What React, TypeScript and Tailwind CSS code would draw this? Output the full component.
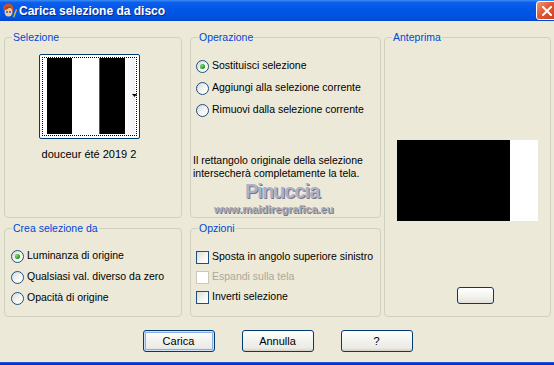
import React from "react";

function Radio({ checked }: { checked?: boolean }) {
  return (
    <span className="flex items-center justify-center w-[13px] h-[13px] shrink-0 rounded-full border border-[#1C5180] bg-[linear-gradient(135deg,#D8D8D2,#F8F8F6_60%,#FFFFFF)]">
      {checked && <span className="w-[5px] h-[5px] rounded-full bg-[radial-gradient(circle_at_35%_35%,#7BE07B,#21A121_60%,#1A8A1A)]" />}
    </span>
  );
}

function Check({ disabled }: { disabled?: boolean }) {
  return (
    <span
      className={
        disabled
          ? "block w-[13px] h-[13px] shrink-0 border border-[#CAC8BB] bg-white"
          : "block w-[13px] h-[13px] shrink-0 border border-[#1C5180] bg-[linear-gradient(135deg,#DCDCD7,#F6F6F4_60%,#FFFFFF)]"
      }
    />
  );
}

function Group({ label, className, children }: { label: string; className: string; children?: React.ReactNode }) {
  return (
    <div className={"relative border border-[#D0D0BF] rounded-[4px] " + className}>
      <span className="absolute left-[7px] top-[-8px] px-[1px] bg-[#ECE9D8] text-[#0046D5] leading-[14px] whitespace-nowrap">
        {label}
      </span>
      {children}
    </div>
  );
}

function Btn({ children, def }: { children: React.ReactNode; def?: boolean }) {
  return (
    <div
      className={
        "flex items-center justify-center w-[72px] h-[22px] rounded-[3px] border border-[#003C74] bg-[linear-gradient(180deg,#FFFFFF_0%,#F4F4F0_40%,#ECEBE6_85%,#D6D0C5_100%)] text-black " +
        (def ? "shadow-[inset_0_0_0_1px_#CEE0F8,inset_0_0_0_2px_#8AAEE6]" : "")
      }
    >
      {children}
    </div>
  );
}

export default function App() {
  return (
    <div className="w-[554px] h-[365px] overflow-hidden flex flex-col bg-[#ECE9D8] font-['Liberation_Sans',Arial,sans-serif] text-[10.5px] text-black">
      {/* Title bar */}
      <div className="h-[21px] shrink-0 flex items-center bg-[linear-gradient(180deg,#3B8CF5_0%,#0C5FEA_12%,#0056E6_45%,#0053E1_80%,#0046CE_100%)]">
        <svg width="16" height="16" viewBox="0 0 16 16" className="ml-[1px] shrink-0">
          <path d="M2 6 C2 2 6 0 9 1 C12 2 13 5 12 8 L10 7 L6 9 Z" fill="#C8552A" />
          <ellipse cx="7.5" cy="9" rx="4" ry="4.5" fill="#F5C89A" />
          <path d="M3 6 C4 3 8 2 11 5 L8 5 L5 7 Z" fill="#B8431E" />
          <circle cx="6" cy="9" r="0.9" fill="#2050A0" />
          <circle cx="9" cy="9" r="0.9" fill="#2050A0" />
          <path d="M12 14 L15 6 L16 7 L13 15 Z" fill="#E8C030" />
          <path d="M11 15 L12 13 L13 15 Z" fill="#2060C0" />
        </svg>
        <span className="ml-[2px] text-white font-bold text-[12px] leading-[16px] font-['Liberation_Sans',Arial,sans-serif] [text-shadow:1px_1px_0_#0A2A8A]">
          Carica selezione da disco
        </span>
        <div className="ml-auto mr-[-4px] w-[22px] h-[19px] rounded-[3px] border border-white bg-[linear-gradient(135deg,#F0977A_0%,#E0562F_45%,#C8401C_100%)] flex items-center justify-center">
          <svg width="10" height="10" viewBox="0 0 10 10">
            <path d="M1 1 L9 9 M9 1 L1 9" stroke="white" strokeWidth="2" strokeLinecap="square" />
          </svg>
        </div>
      </div>

      {/* Body */}
      <div className="flex pt-[16px] pl-[4px]">
        {/* Left column */}
        <div className="flex flex-col w-[178px] gap-[10px]">
          <Group label="Selezione" className="h-[181px]">
            <div className="pl-[33px] pt-[16px] flex flex-col items-center w-[135px]">
              <div className="w-[101px] h-[85px] rounded-[2px] border border-[#003C74] bg-white p-[2px]">
                <div className="relative w-full h-full border border-dotted border-black flex pl-[4px] pt-[0px]">
                  <div className="flex h-[76px]">
                    <div className="w-[25px] bg-black" />
                    <div className="w-[27px] bg-white" />
                    <div className="w-[1px] bg-[#555555]" />
                    <div className="w-[25px] bg-black" />
                    <div className="w-[10px] bg-[linear-gradient(90deg,#FFFFFF,#F0F0F0)]" />
                  </div>
                  <svg width="5" height="3" viewBox="0 0 5 3" className="absolute right-[-1px] top-[36px]">
                    <path d="M0 0 L5 0 L2.5 3 Z" fill="black" />
                  </svg>
                </div>
              </div>
              <div className="mt-[9px] leading-[13px] whitespace-nowrap text-[11px]">douceur été 2019 2</div>
            </div>
          </Group>
          <Group label="Crea selezione da" className="h-[89px]">
            <div className="pl-[6px] pt-[19px] flex flex-col gap-[5px]">
              <div className="flex items-center h-[16px] gap-[3px] whitespace-nowrap">
                <Radio checked />
                <span>Luminanza di origine</span>
              </div>
              <div className="flex items-center h-[16px] gap-[3px] whitespace-nowrap">
                <Radio />
                <span>Qualsiasi val. diverso da zero</span>
              </div>
              <div className="flex items-center h-[16px] gap-[3px] whitespace-nowrap">
                <Radio />
                <span>Opacità di origine</span>
              </div>
            </div>
          </Group>
        </div>

        {/* Middle column */}
        <div className="flex flex-col w-[191px] ml-[8px] gap-[10px]">
          <Group label="Operazione" className="h-[181px]">
            <div className="pl-[5px] pt-[20px] flex flex-col gap-[6px]">
              <div className="flex items-center h-[16px] gap-[3px] whitespace-nowrap">
                <Radio checked />
                <span>Sostituisci selezione</span>
              </div>
              <div className="flex items-center h-[16px] gap-[3px] whitespace-nowrap">
                <Radio />
                <span>Aggiungi alla selezione corrente</span>
              </div>
              <div className="flex items-center h-[16px] gap-[3px] whitespace-nowrap">
                <Radio />
                <span>Rimuovi dalla selezione corrente</span>
              </div>
            </div>
            <div className="pl-[2px] mt-[36px] leading-[13px] whitespace-nowrap">
              <div>Il rettangolo originale della selezione</div>
              <div>intersecherà completamente la tela.</div>
            </div>
            <div className="pl-[54px] mt-[1px] leading-[20px] text-[20px] font-bold tracking-[-1px] text-[#AEB0C4] [text-shadow:1px_1px_0_#75778E]">
              Pinuccia
            </div>
            <div className="pl-[23px] mt-[2px] leading-[12px] text-[11px] font-bold text-[#A9A9B6] [text-shadow:1px_1px_0_#777786]">
              www.maidiregrafica.eu
            </div>
          </Group>
          <Group label="Opzioni" className="h-[89px]">
            <div className="pl-[5px] pt-[20px] flex flex-col gap-[4px]">
              <div className="flex items-center h-[16px] gap-[3px] whitespace-nowrap">
                <Check />
                <span>Sposta in angolo superiore sinistro</span>
              </div>
              <div className="flex items-center h-[16px] gap-[3px] whitespace-nowrap">
                <Check disabled />
                <span className="text-[#ACA899]">Espandi sulla tela</span>
              </div>
              <div className="flex items-center h-[16px] gap-[3px] whitespace-nowrap">
                <Check />
                <span>Inverti selezione</span>
              </div>
            </div>
          </Group>
        </div>

        {/* Right column */}
        <Group label="Anteprima" className="w-[167px] h-[280px] ml-[3px]">
          <div className="pl-[12px] mt-[102px] flex">
            <div className="w-[113px] h-[81px] bg-black" />
            <div className="w-[28px] h-[81px] bg-white" />
          </div>
          <div className="pl-[72px] mt-[66px]">
            <div className="w-[37px] h-[17px] rounded-[3px] border border-[#003C74] bg-[linear-gradient(180deg,#FFFFFF,#F2F2EE_60%,#E2E0D8)]" />
          </div>
        </Group>
      </div>

      {/* Buttons */}
      <div className="flex justify-center gap-[27px] mt-[13px] pl-[1px] text-[11px]">
        <Btn def>Carica</Btn>
        <Btn>Annulla</Btn>
        <Btn>?</Btn>
      </div>

      <div className="mt-auto h-[3px] shrink-0 bg-[linear-gradient(180deg,#2A5FE0,#0A36CC_50%,#0831C0)]" />
    </div>
  );
}
